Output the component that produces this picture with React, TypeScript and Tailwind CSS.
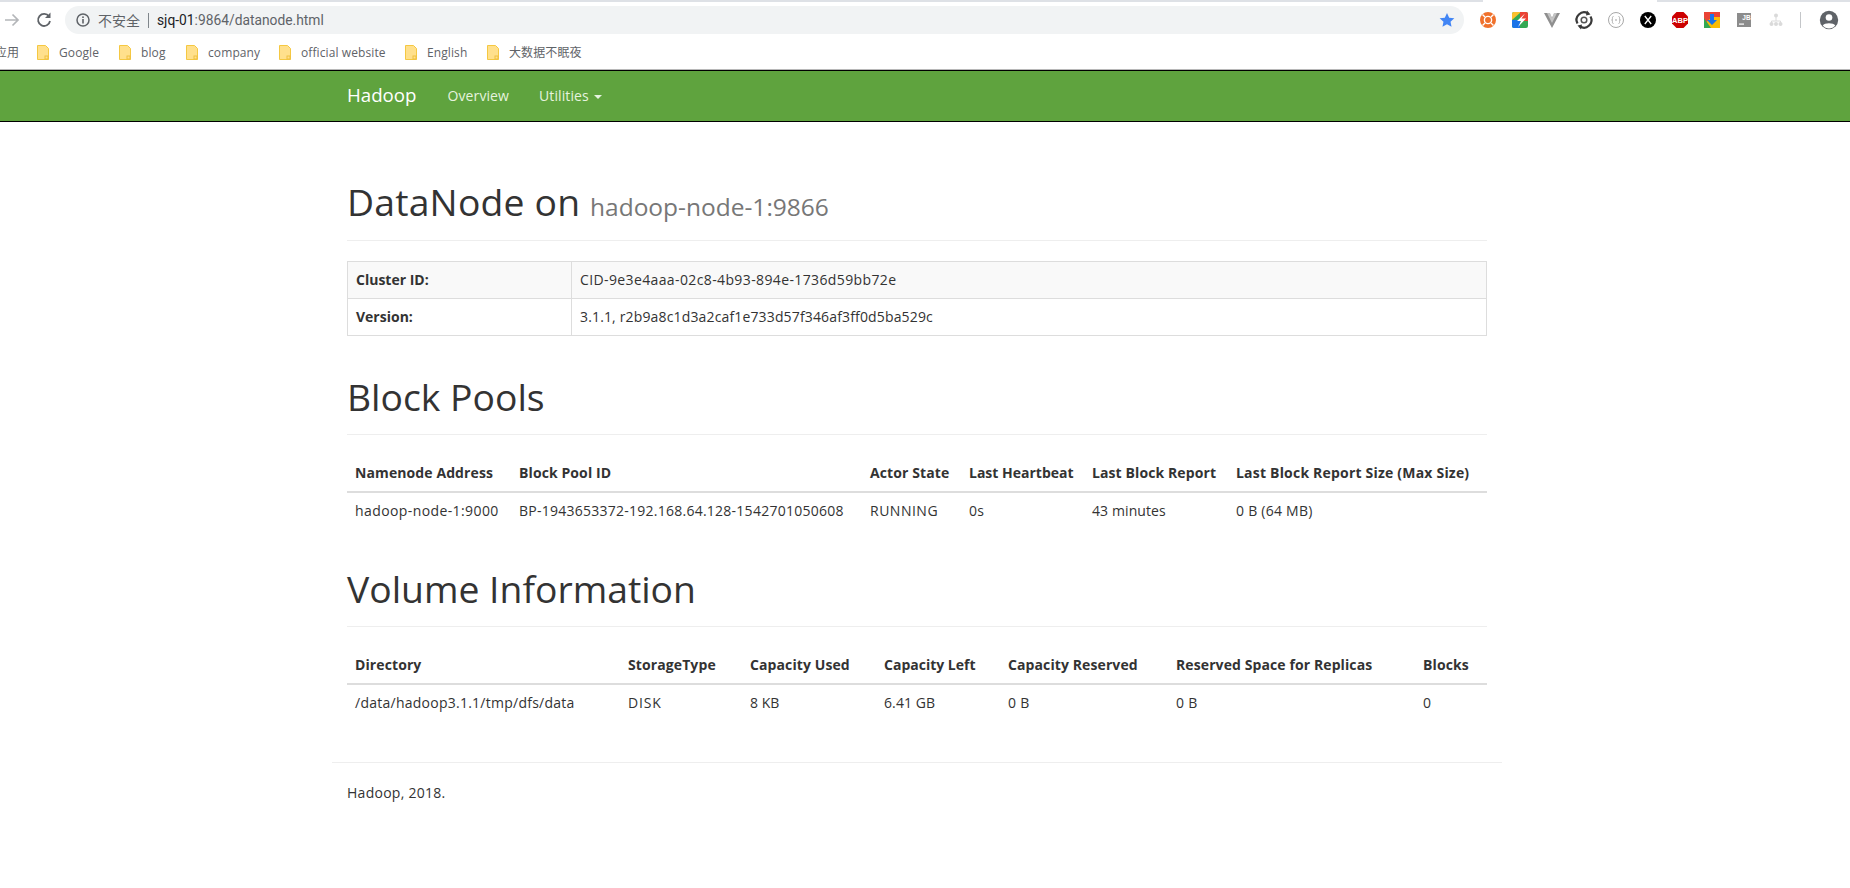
import React from "react";

function Folder() {
  return (
    <svg width="12" height="15" viewBox="0 0 12 15" className="shrink-0">
      <path d="M.5.5h8l3 3v11H.5z" fill="#ffe08c" stroke="#f5c842" />
      <rect x="8" y="11" width="3" height="3" fill="#ffe08c" stroke="#f0c040" strokeWidth="1" />
    </svg>
  );
}

const bookmarks = [
  ["Google", "w-[82px]"],
  ["blog", "w-[67px]"],
  ["company", "w-[93px]"],
  ["official website", "w-[126px]"],
  ["English", "w-[82px]"],
  ["大数据不眠夜", "w-[100px]"],
];

function ExtIcons() {
  return (
    <div className="flex items-center">
      <svg width="32" height="32" viewBox="0 0 32 32"><circle cx="16" cy="16" r="8" fill="#f0712c" /><circle cx="16" cy="16" r="3.600" fill="none" stroke="#fff" strokeWidth="1.400" /><path d="M10.500 10.500l2.500 2.500M21.500 10.500L19 13M10.500 21.500l2.500-2.500M21.500 21.500L19 19" stroke="#fff" strokeWidth="1.400" /><circle cx="16" cy="16" r="2.400" fill="#f0712c" /></svg>
      <svg width="32" height="32" viewBox="0 0 32 32"><rect x="8" y="8" width="16" height="16" rx="2" fill="#34a853" /><path d="M8 10a2 2 0 012-2h7l-9 8z" fill="#fbc02d" /><path d="M16 8h6a2 2 0 012 2v7h-8z" fill="#ea4335" /><path d="M8 16l8 0v8h-6a2 2 0 01-2-2z" fill="#1a73e8" /><path d="M21 9.500l-8 7.500h4l-3 6 8-8.500h-4.500z" fill="#fff" /></svg>
      <svg width="32" height="32" viewBox="0 0 32 32"><path d="M8 9h5.500L16 14l2.500-5H24l-8 15z" fill="#8f8f8f" /><path d="M11 9h3l2 5 2-5h3l-5 10z" fill="#c4c4c4" /></svg>
      <svg width="32" height="32" viewBox="0 0 32 32"><path d="M9.500 19.500a7.500 7.500 0 0110.500-10" fill="none" stroke="#3a3a3a" strokeWidth="2.200" /><path d="M22.500 12.500a7.500 7.500 0 01-10.500 10" fill="none" stroke="#3a3a3a" strokeWidth="2.200" /><path d="M19 6.500l3.500 4-4.500 1zM13 25.500l-3.500-4 4.500-1z" fill="#3a3a3a" /><circle cx="16" cy="16" r="2.800" fill="none" stroke="#555" strokeWidth="1.500" /></svg>
      <svg width="32" height="32" viewBox="0 0 32 32"><circle cx="16" cy="16" r="7.500" fill="#fff" stroke="#a8a8a8" /><path d="M13.500 12.500c-1.500 0-1 1.500-1 3l-1 .5 1 .5c0 1.500-.5 3 1 3M18.500 12.500c1.500 0 1 1.500 1 3l1 .5-1 .5c0 1.500.5 3-1 3" fill="none" stroke="#a0a0a0" strokeWidth=".8" /><path d="M15 16h2" stroke="#a0a0a0" /></svg>
      <svg width="32" height="32" viewBox="0 0 32 32"><circle cx="16" cy="16" r="8" fill="#000" /><path d="M12.800 12l6.400 8M19.200 12l-6.400 8" stroke="#fff" strokeWidth="1.300" /></svg>
      <svg width="32" height="32" viewBox="0 0 32 32"><path d="M12.500 8h7l4.500 4.500v7L19.500 24h-7L8 19.500v-7z" fill="#c00" /><text x="16" y="19" textAnchor="middle" fontSize="7.500" fontWeight="700" fill="#fff" fontFamily="Liberation Sans, sans-serif">ABP</text></svg>
      <svg width="32" height="32" viewBox="0 0 32 32"><rect x="8" y="8" width="16" height="16" fill="#fbbc05" /><path d="M8 8h16v5H16l-8 7z" fill="#ea4335" /><path d="M8 14l7 10H8z" fill="#34a853" /><path d="M14 10h4v6h3l-5 5-5-5h3z" fill="#1a73e8" /></svg>
      <svg width="32" height="32" viewBox="0 0 32 32"><rect x="9" y="9" width="14" height="14" fill="#8c8c8c" /><text x="18.500" y="15.500" textAnchor="middle" fontSize="6.500" fontWeight="700" fill="#fff" fontFamily="Liberation Sans, sans-serif">JB</text><rect x="11" y="19.500" width="5" height="1.200" fill="#fff" /></svg>
      <svg width="32" height="32" viewBox="0 0 32 32"><g fill="#dadada"><circle cx="16" cy="11.500" r="2" /><circle cx="11.500" cy="20" r="2" /><circle cx="16" cy="20" r="2" /><circle cx="20.500" cy="20" r="2" /></g><path d="M16 12v5M11.500 20v-3h9v3" fill="none" stroke="#dadada" /></svg>
    </div>
  );
}

function Th({ children, className = "tracking-[0.1px]" }: { children: React.ReactNode; className?: string }) {
  return <th className={`p-2 text-left font-bold leading-[20px] border-b-2 border-[#dddddd] whitespace-nowrap ${className}`}>{children}</th>;
}
function Td({ children, className = "tracking-[0.25px]" }: { children: React.ReactNode; className?: string }) {
  return <td className={`p-2 leading-[20px] whitespace-nowrap ${className}`}>{children}</td>;
}

export default function App() {
  return (
    <div className="w-[1850px] h-[888px] overflow-hidden bg-white text-[14px] text-[#333333] font-['Open_Sans','Noto_Sans_CJK_SC',sans-serif]">
      {/* browser chrome */}
      <div className="h-[2px] flex justify-between">
        <div className="w-[1483px] bg-[#dee1e6]" />
        <div className="w-[193px] bg-[#dee1e6]" />
      </div>
      <div className="h-[36px] flex items-center">
        <svg width="18" height="18" viewBox="0 0 18 18" className="ml-[3px] shrink-0"><path d="M2 9h13M9.500 3.500L15 9l-5.500 5.500" fill="none" stroke="#b4b6b9" strokeWidth="1.700" /></svg>
        <svg width="18" height="18" viewBox="0 0 18 18" className="ml-[14px] shrink-0"><path d="M14 5.500A6 6 0 1015 10" fill="none" stroke="#5f6368" strokeWidth="1.800" /><path d="M15.500 1.500v5.500H10z" fill="#5f6368" /></svg>
        <div className="ml-[12px] w-[1399px] h-[28px] rounded-full bg-[#f1f3f4] flex items-center pl-[10px] pr-[9px]">
          <svg width="16" height="16" viewBox="0 0 16 16" className="shrink-0"><circle cx="8" cy="8" r="6" fill="none" stroke="#5f6368" strokeWidth="1.500" /><rect x="7.200" y="7" width="1.600" height="4.500" fill="#5f6368" /><rect x="7.200" y="4.400" width="1.600" height="1.600" fill="#5f6368" /></svg>
          <span className="ml-[7px] text-[14px] text-[#5f6368]">不安全</span>
          <span className="mx-[8px] h-[15px] w-px bg-[#80868b]" />
          <span className="text-[13.8px] text-[#5f6368] whitespace-nowrap font-['Roboto',sans-serif]"><span className="text-[#202124]">sjq-01</span>:9864/datanode.html</span>
          <svg width="16" height="16" viewBox="0 0 24 24" className="ml-auto shrink-0"><path d="M12 1.500l3.300 7 7.700.9-5.700 5.200 1.500 7.600L12 18.400l-6.800 3.800 1.500-7.600L1 9.400l7.700-.9z" fill="#4285f4" /></svg>
        </div>
        <div className="ml-[8px]"><ExtIcons /></div>
        <div className="ml-[8px] w-px h-[16px] bg-[#c4c6c9]" />
        <svg width="20" height="20" viewBox="0 0 24 24" className="ml-[18px] shrink-0"><circle cx="12" cy="12" r="11" fill="#5f6368" /><circle cx="12" cy="9" r="4" fill="#fff" /><path d="M4.500 18.500c2-3.500 13-3.500 15 0a9.500 9.500 0 01-15 0z" fill="#fff" /></svg>
      </div>
      <div className="h-[32px] pb-[3px] flex items-center text-[12px] tracking-[0.1px] text-[#5f6368]">
        <span className="w-[37px] shrink-0 pr-[18px] whitespace-nowrap flex justify-end">应用</span>
        {bookmarks.map(([t, w]) => (
          <div key={t} className={`flex items-center gap-[10px] shrink-0 ${w}`}>
            <Folder />
            <span className="whitespace-nowrap">{t}</span>
          </div>
        ))}
      </div>

      {/* navbar */}
      <div className="h-[52px] border-y border-black bg-[#5fa33e] shadow-[0_-1px_0_#b8b8b8]">
        <div className="ml-[347px] flex items-center h-full pb-[1px] text-white">
          <span className="text-[18.7px]">Hadoop</span>
          <span className="ml-[31px] text-[14px] tracking-[0.1px] text-[#e6f3df]">Overview</span>
          <span className="ml-[30px] text-[14px] tracking-[0.1px] text-[#e6f3df]">Utilities</span>
          <span className="ml-[5px] mt-[2px] border-x-4 border-x-transparent border-t-4 border-t-[#e6f3df]" />
        </div>
      </div>

      {/* content */}
      <div className="w-[1140px] ml-[347px]">
        <div className="mt-[60px] pb-[13px] border-b border-[#eeeeee]">
          <h1 className="text-[37.3px] leading-[40px] text-[#333333] whitespace-nowrap"><span className="tracking-[0.2px]">DataNode on</span> <small className="text-[24.5px] text-[#777777]">hadoop-node-1:9866</small></h1>
        </div>
        <table className="mt-[20px] w-full table-fixed border-collapse border border-[#dddddd]">
          <colgroup><col className="w-[224px]" /><col /></colgroup>
          <tbody>
            <tr className="bg-[#f9f9f9]">
              <td className="border border-[#dddddd] p-2 font-bold leading-[20px]">Cluster ID:</td>
              <td className="border border-[#dddddd] p-2 leading-[20px] tracking-[0.38px]">CID-9e3e4aaa-02c8-4b93-894e-1736d59bb72e</td>
            </tr>
            <tr>
              <td className="border border-[#dddddd] p-2 font-bold leading-[20px]">Version:</td>
              <td className="border border-[#dddddd] p-2 leading-[20px] tracking-[0.15px]">3.1.1, r2b9a8c1d3a2caf1e733d57f346af3ff0d5ba529c</td>
            </tr>
          </tbody>
        </table>

        <div className="mt-[41px] pb-[17px] border-b border-[#eeeeee]">
          <h1 className="text-[37.3px] leading-[40px] whitespace-nowrap">Block Pools</h1>
        </div>
        <table className="mt-[20px] w-full table-fixed border-collapse">
          <colgroup>
            <col className="w-[164px]" /><col className="w-[351px]" /><col className="w-[99px]" /><col className="w-[123px]" /><col className="w-[144px]" /><col />
          </colgroup>
          <thead><tr><Th>Namenode Address</Th><Th>Block Pool ID</Th><Th>Actor State</Th><Th className="">Last Heartbeat</Th><Th>Last Block Report</Th><Th className="tracking-[0.2px]">Last Block Report Size (Max Size)</Th></tr></thead>
          <tbody><tr><Td className="tracking-[0.4px]">hadoop-node-1:9000</Td><Td>BP-1943653372-192.168.64.128-1542701050608</Td><Td className="tracking-[0.5px]">RUNNING</Td><Td>0s</Td><Td className="tracking-[0.1px]">43 minutes</Td><Td>0 B (64 MB)</Td></tr></tbody>
        </table>

        <div className="mt-[40px] pb-[17px] border-b border-[#eeeeee]">
          <h1 className="text-[37.3px] leading-[40px] whitespace-nowrap">Volume Information</h1>
        </div>
        <table className="mt-[20px] w-full table-fixed border-collapse">
          <colgroup>
            <col className="w-[273px]" /><col className="w-[122px]" /><col className="w-[134px]" /><col className="w-[124px]" /><col className="w-[168px]" /><col className="w-[247px]" /><col />
          </colgroup>
          <thead><tr><Th>Directory</Th><Th>StorageType</Th><Th>Capacity Used</Th><Th className="">Capacity Left</Th><Th>Capacity Reserved</Th><Th>Reserved Space for Replicas</Th><Th>Blocks</Th></tr></thead>
          <tbody><tr><Td>/data/hadoop3.1.1/tmp/dfs/data</Td><Td className="tracking-[0.8px]">DISK</Td><Td className="">8 KB</Td><Td className="tracking-[0.1px]">6.41 GB</Td><Td>0 B</Td><Td>0 B</Td><Td>0</Td></tr></tbody>
        </table>
      </div>

      <div className="mt-[41px] ml-[332px] w-[1170px] border-t border-[#eeeeee] px-[15px] pt-[20px] leading-[20px] tracking-[0.27px]">Hadoop, 2018.</div>
    </div>
  );
}
